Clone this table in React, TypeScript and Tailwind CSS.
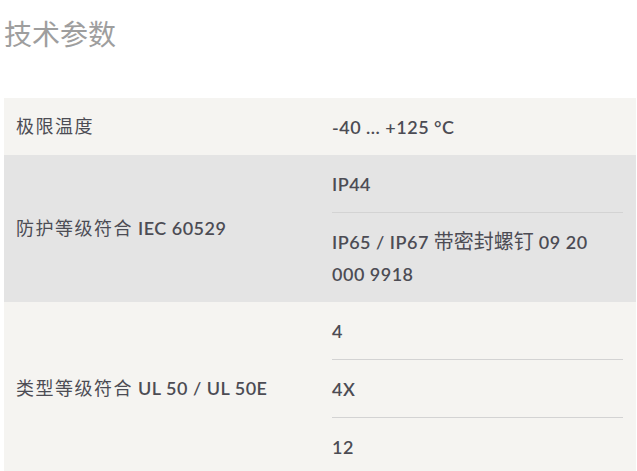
const rows = [
  { label: "极限温度", values: ["-40 ... +125 °C"] },
  { label: "防护等级符合 IEC 60529", values: ["IP44", "IP65 / IP67 带密封螺钉 09 20 000\u00a09918"] },
  { label: "类型等级符合 UL 50 / UL 50E", values: ["4", "4X", "12"] },
];

// Latin parts are set heavier, Chinese parts stay regular
const Mixed = ({ text, cjk }: { text: string; cjk: string }) => (
  <>
    {text.split(/([\u4e00-\u9fff]+)/).map((part, i) =>
      /[\u4e00-\u9fff]/.test(part) ? (
        <span key={i} className={`font-normal ${cjk}`}>{part}</span>
      ) : (
        <span key={i} className="font-semibold">{part}</span>
      )
    )}
  </>
);

const App = () => {
  return (
    <div
      className="bg-white min-h-[471px] px-1"
      style={{ fontFamily: '"Lato", "Noto Sans CJK SC", sans-serif' }}
    >
      <h2 className="pt-[16px] h-[98px] text-[28px] leading-[36px] font-normal text-[#9e9e9e]">
        技术参数
      </h2>
      <div className="w-[632px]">
        {rows.map((row, i) => (
          <div
            key={row.label}
            className={`grid grid-cols-2 ${i % 2 === 0 ? "bg-[#f5f4f1]" : "bg-[#e4e4e4]"}`}
          >
            <div className="flex items-center px-3 text-[18px] tracking-[0.5px] text-[#4c4c54]">
              <span>
                <Mixed text={row.label} cjk="tracking-[1.5px]" />
              </span>
            </div>
            <div className="pl-3 pr-[13px]">
              {row.values.map((v, j) => (
                <div
                  key={v}
                  className={`py-[12.5px] leading-[32px] text-[18px] tracking-[0.5px] text-[#4c4c54] ${
                    j > 0 ? "border-t border-[#d3d3d3]" : ""
                  }`}
                >
                  <Mixed text={v} cjk="text-[20px] leading-none tracking-normal" />
                </div>
              ))}
            </div>
          </div>
        ))}
      </div>
    </div>
  );
};

export default App;
